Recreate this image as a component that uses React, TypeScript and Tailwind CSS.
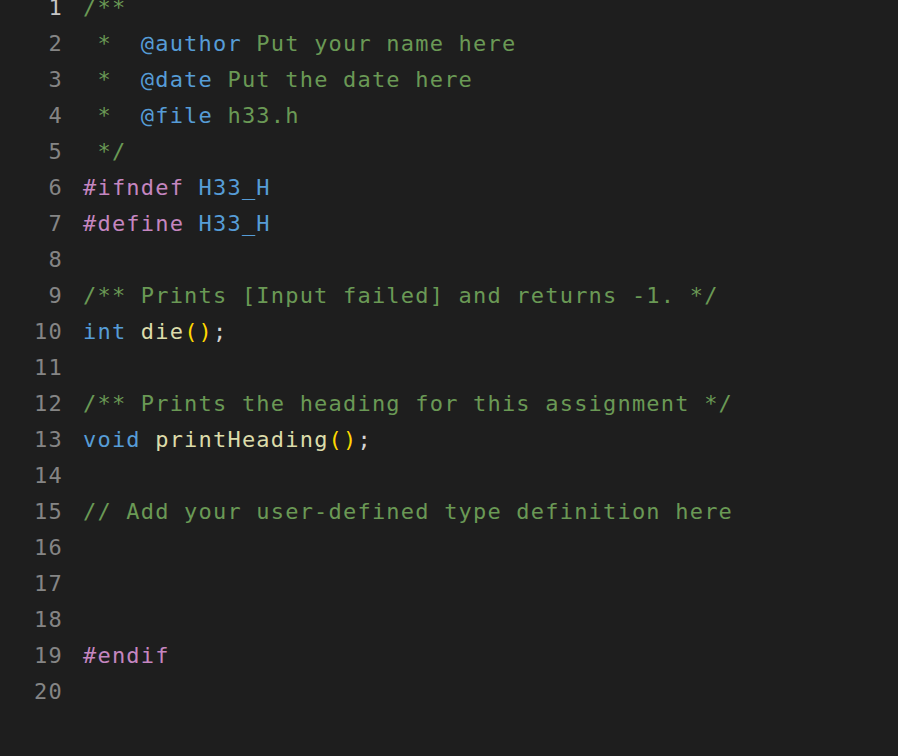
import React from 'react';

type Tok = { t: string; c: string };

const C = {
  comment: 'text-[#6a9955]',
  blue: 'text-[#569cd6]',
  pre: 'text-[#c586c0]',
  fn: 'text-[#dcdcaa]',
  paren: 'text-[#ffd700]',
  plain: 'text-[#d4d4d4]',
};

const lines: Tok[][] = [
  [{ t: '/**', c: C.comment }],
  [{ t: ' *  ', c: C.comment }, { t: '@author', c: C.blue }, { t: ' Put your name here', c: C.comment }],
  [{ t: ' *  ', c: C.comment }, { t: '@date', c: C.blue }, { t: ' Put the date here', c: C.comment }],
  [{ t: ' *  ', c: C.comment }, { t: '@file', c: C.blue }, { t: ' h33.h', c: C.comment }],
  [{ t: ' */', c: C.comment }],
  [{ t: '#ifndef', c: C.pre }, { t: ' ', c: C.plain }, { t: 'H33_H', c: C.blue }],
  [{ t: '#define', c: C.pre }, { t: ' ', c: C.plain }, { t: 'H33_H', c: C.blue }],
  [],
  [{ t: '/** Prints [Input failed] and returns -1. */', c: C.comment }],
  [{ t: 'int', c: C.blue }, { t: ' ', c: C.plain }, { t: 'die', c: C.fn }, { t: '()', c: C.paren }, { t: ';', c: C.plain }],
  [],
  [{ t: '/** Prints the heading for this assignment */', c: C.comment }],
  [{ t: 'void', c: C.blue }, { t: ' ', c: C.plain }, { t: 'printHeading', c: C.fn }, { t: '()', c: C.paren }, { t: ';', c: C.plain }],
  [],
  [{ t: '// Add your user-defined type definition here', c: C.comment }],
  [],
  [],
  [],
  [{ t: '#endif', c: C.pre }],
  [],
];

export default function App() {
  return (
    <div
      className="w-[898px] h-[756px] overflow-hidden bg-[#1e1e1e] text-[22px] leading-[36px] tracking-[1.2px]"
      style={{ fontFamily: '"DejaVu Sans Mono", "Liberation Mono", monospace' }}
    >
      <div className="-mt-[10px]">
        {lines.map((toks, i) => (
          <div key={i} className="flex h-[36px]">
            <div className={`w-[63px] shrink-0 text-right ${i === 0 ? 'text-[#c6c6c6]' : 'text-[#858585]'}`}>
              {i + 1}
            </div>
            <div className="pl-[20px] whitespace-pre">
              {toks.map((tk, j) => (
                <span key={j} className={tk.c}>{tk.t}</span>
              ))}
            </div>
          </div>
        ))}
      </div>
    </div>
  );
}
